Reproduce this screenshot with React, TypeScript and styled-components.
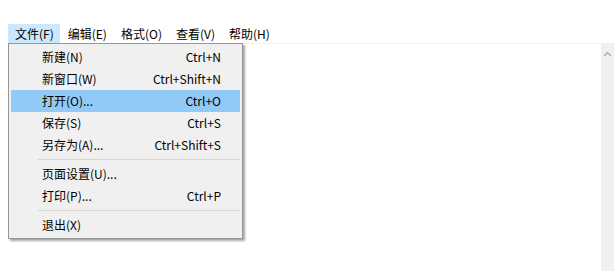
import styled, { createGlobalStyle } from "styled-components";

interface ItemProps {
  active?: boolean;
}

const menuBar = ["文件(F)", "编辑(E)", "格式(O)", "查看(V)", "帮助(H)"];

const fileMenu: ({ label: string; keys?: string; active?: boolean } | null)[] = [
  { label: "新建(N)", keys: "Ctrl+N" },
  { label: "新窗口(W)", keys: "Ctrl+Shift+N" },
  { label: "打开(O)...", keys: "Ctrl+O", active: true },
  { label: "保存(S)", keys: "Ctrl+S" },
  { label: "另存为(A)...", keys: "Ctrl+Shift+S" },
  null,
  { label: "页面设置(U)..." },
  { label: "打印(P)...", keys: "Ctrl+P" },
  null,
  { label: "退出(X)" },
];

const App = () => {
  return (
    <>
      <GlobalStyle />
      <Window>
        <MenuBar>
          {menuBar.map((m, i) => (
            <TopItem key={m} active={i === 0}>
              {m}
            </TopItem>
          ))}
        </MenuBar>
        <EditArea>
          <TextPane />
          <ScrollBar>
            <svg width="9" height="6" viewBox="0 0 9 6">
              <path d="M1 5 L4.5 1.5 L8 5" fill="none" stroke="#a3a3a3" strokeWidth="1.2" />
            </svg>
          </ScrollBar>
        </EditArea>
        <Dropdown>
          {fileMenu.map((item, i) =>
            item ? (
              <Item key={i} active={item.active}>
                <span>{item.label}</span>
                <Keys>{item.keys}</Keys>
              </Item>
            ) : (
              <Separator key={i} />
            )
          )}
        </Dropdown>
      </Window>
    </>
  );
};

const GlobalStyle = createGlobalStyle`
  html, body {
    margin: 0;
    background: #ffffff;
  }
  body {
    font-family: "Noto Sans CJK SC", "Liberation Sans", sans-serif;
    font-size: 12px;
    color: #000000;
  }
`;

const Window = styled.div`
  position: relative;
  width: 614px;
  height: 271px;
  padding: 24px 0 0 8px;
  box-sizing: border-box;
  display: flex;
  flex-direction: column;
  overflow: hidden;
`;

const MenuBar = styled.div`
  display: flex;
  height: 19px;
  align-items: stretch;
`;

const TopItem = styled.div<ItemProps>`
  display: flex;
  align-items: center;
  padding: 0 5px 0 6px;
  margin-right: 1px;
  line-height: 1;
  background: ${(p) => (p.active ? "#cce8ff" : "transparent")};
  border: 1px solid ${(p) => (p.active ? "#cce8ff" : "transparent")};
`;

const EditArea = styled.div`
  flex: 1;
  display: flex;
  border-top: 1px solid #f0f0f0;
  margin-right: 0;
`;

const TextPane = styled.div`
  flex: 1;
  background: #ffffff;
`;

const ScrollBar = styled.div`
  width: 13px;
  background: #f0f0f0;
  display: flex;
  justify-content: center;
  padding-top: 7px;
  box-sizing: border-box;
`;

const Dropdown = styled.div`
  position: absolute;
  left: 8px;
  top: 43px;
  width: 235px;
  box-sizing: border-box;
  padding: 2px;
  background: #f0f0f0;
  border: 1px solid #979797;
  box-shadow: 2px 2px 2px rgba(0, 0, 0, 0.35);
  display: flex;
  flex-direction: column;
`;

const Item = styled.div<ItemProps>`
  display: flex;
  justify-content: space-between;
  align-items: center;
  height: 22px;
  padding: 0 19px 0 31px;
  background: ${(p) => (p.active ? "#91c9f7" : "transparent")};
  line-height: 1;
`;

const Keys = styled.span`
  letter-spacing: 0;
`;

const Separator = styled.div`
  height: 1px;
  margin: 3px 0 3px 27px;
  background: #d7d7d7;
`;

export default App;
